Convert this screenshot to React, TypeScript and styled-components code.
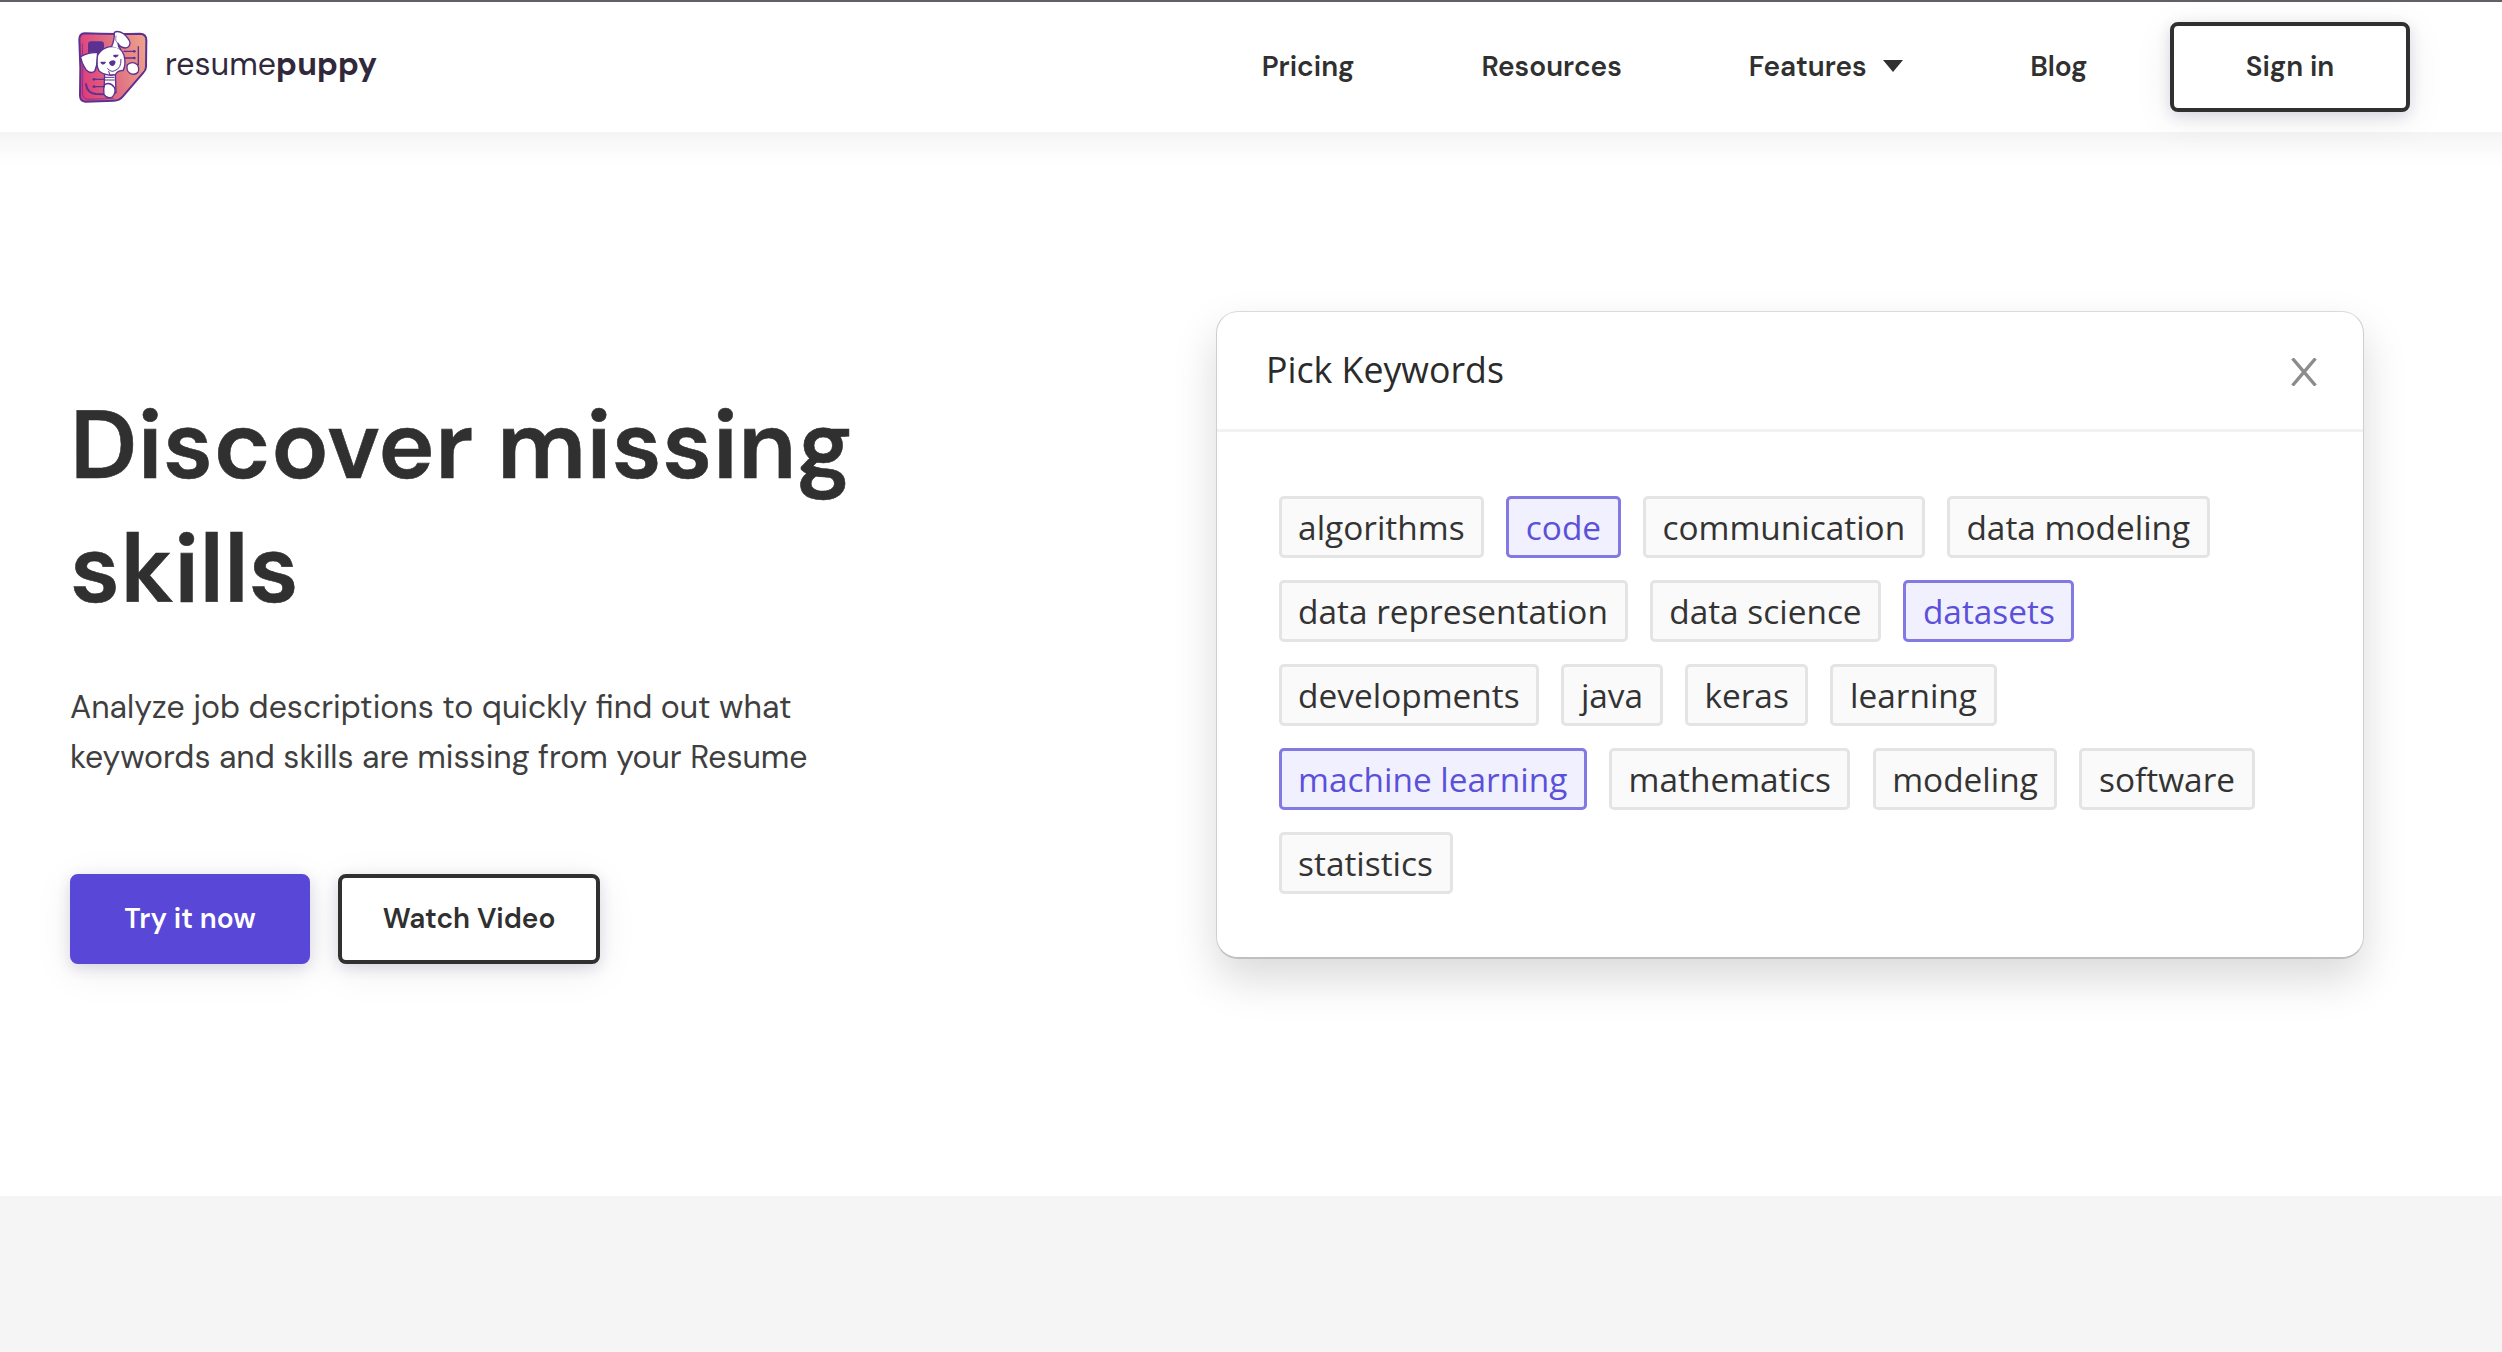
import React from "react";
import styled, { createGlobalStyle, css } from "styled-components";

const ink = "#303030";
const brand = "#5947d8";

const GlobalStyle = createGlobalStyle`
  *, *::before, *::after { box-sizing: border-box; }
  body {
    margin: 0;
    background: #fff;
    color: ${ink};
    font-family: "DM Sans", Inter, sans-serif;
    overflow: hidden;
  }
  h1, h2, p { margin: 0; }
`;

const Page = styled.div`
  display: flex;
  flex-direction: column;
  height: 1352px;
`;

const Header = styled.header`
  position: relative;
  z-index: 1;
  flex: none;
  display: flex;
  align-items: center;
  justify-content: space-between;
  height: 132px;
  padding: 0 92px 0 74px;
  background: #fff;
  border-top: 2px solid #625f67;
  box-shadow: 0 -20px 30px 30px rgba(0, 0, 0, 0.06);
`;

const Brand = styled.a`
  display: flex;
  align-items: center;
  gap: 11px;
  margin-top: -2px;
`;

const Mark = styled.svg`
  display: block;
  width: 80px;
  height: 84px;
`;

const Wordmark = styled.span`
  margin-top: -4px;
  font-size: 32px;
  line-height: 40px;
  font-weight: 400;
  letter-spacing: 0.1px;
  color: #32283c;

  b {
    font-weight: 700;
  }
`;

const Nav = styled.nav`
  display: flex;
  align-items: center;
  gap: 127px;
`;

const NavLink = styled.a<{ $last?: boolean }>`
  display: flex;
  align-items: center;
  gap: 16.5px;
  font-size: 28px;
  line-height: 40px;
  font-weight: 600;
  margin-right: ${(p) => (p.$last ? "-44.4px" : "0")};
`;

const Caret = styled.svg`
  display: block;
  width: 20px;
  height: 12px;
  margin-top: -3px;
`;

const Button = styled.button<{ $solid?: boolean; $width: number }>`
  width: ${(p) => p.$width}px;
  height: 90px;
  padding: 0;
  border: 4px solid ${ink};
  border-radius: 8px;
  background: #fff;
  color: ${ink};
  font: 600 28px/40px "DM Sans", Inter, sans-serif;
  box-shadow: 0 8px 40px rgba(0, 0, 0, 0.07), 0 4px 14px rgba(50, 50, 130, 0.16);
  ${(p) =>
    p.$solid &&
    css`
      border-color: ${brand};
      background: ${brand};
      color: #fff;
    `}
`;

const Hero = styled.main`
  flex: none;
  display: flex;
  align-items: flex-start;
  justify-content: space-between;
  height: 1064px;
  padding: 179px 138px 0 70px;
`;

const Copy = styled.section`
  width: 830px;
  padding-top: 73px;
`;

const Title = styled.h1`
  font-size: 96px;
  line-height: 124px;
  font-weight: 600;
  letter-spacing: 0.22px;
  -webkit-text-stroke: 0.6px ${ink};
`;

const Lead = styled.p`
  margin-top: 50px;
  font-size: 32px;
  line-height: 50px;
  color: #3f3f3f;
`;

const Actions = styled.div`
  display: flex;
  gap: 28px;
  margin-top: 92px;
`;

const Card = styled.section`
  width: 1148px;
  height: 648px;
  border: 1px solid #cfcfcf;
  border-top-color: #dadada;
  border-bottom: 2px solid #bfbfbf;
  border-radius: 22px;
  background: #fff;
  box-shadow: 0 20px 44px rgba(0, 0, 0, 0.15);
  font-family: "Open Sans", sans-serif;
`;

const CardHead = styled.header`
  display: flex;
  align-items: center;
  justify-content: space-between;
  height: 120px;
  padding: 0 46px 4px 49px;
  border-bottom: 3px solid #f2f2f2;
`;

const CardTitle = styled.h2`
  font-size: 35.7px;
  line-height: 48px;
  font-weight: 400;
  color: #2b2b2b;
`;

const Close = styled.svg`
  display: block;
  width: 26px;
  height: 28px;
  margin-top: 7px;
`;

const Chips = styled.div`
  display: flex;
  flex-wrap: wrap;
  gap: 22px 22.1px;
  padding: 63.5px 60px 0 61.5px;
`;

const Chip = styled.span<{ $picked: boolean }>`
  height: 62px;
  padding: 0 16.6px;
  border: 3px solid ${(p) => (p.$picked ? "#8279e3" : "#e4e4e4")};
  border-radius: 5px;
  background: ${(p) => (p.$picked ? "#f1f0fe" : "#fafafa")};
  color: ${(p) => (p.$picked ? "#5b50da" : "#333")};
  font-size: 33.4px;
  line-height: 56px;
  white-space: nowrap;
`;

const Below = styled.section`
  flex: 1;
  background: #f5f5f5;
`;

const keywords: { label: string; picked?: boolean }[] = [
  { label: "algorithms" },
  { label: "code", picked: true },
  { label: "communication" },
  { label: "data modeling" },
  { label: "data representation" },
  { label: "data science" },
  { label: "datasets", picked: true },
  { label: "developments" },
  { label: "java" },
  { label: "keras" },
  { label: "learning" },
  { label: "machine learning", picked: true },
  { label: "mathematics" },
  { label: "modeling" },
  { label: "software" },
  { label: "statistics" },
];

function PuppyMark() {
  return (
    <Mark viewBox="0 0 240 252" fill="none" stroke="#5c3191" strokeLinecap="round" strokeLinejoin="round">
      <defs>
        <linearGradient id="sheet" x1="16" y1="140" x2="218" y2="100" gradientUnits="userSpaceOnUse">
          <stop offset="0" stopColor="#de3d7c" />
          <stop offset="0.5" stopColor="#e06f82" />
          <stop offset="1" stopColor="#eda08b" />
        </linearGradient>
      </defs>
      {/* folded resume sheet */}
      <path
        d="M32 28 Q110 31 198 29 Q217 30 217 48 L216 128 Q216 138 208 146 L146 218 Q136 230 120 230 L34 233 Q19 232 18 216 Q21 130 16 46 Q16 29 32 28Z"
        fill="url(#sheet)"
        strokeWidth="6"
      />
      <path d="M25 60 Q28 130 25 205 Q26 224 42 226 L118 223" strokeWidth="2" />
      <rect x="42" y="52" width="48" height="40" rx="10" fill="#5c3191" stroke="none" />
      <path d="M150 82H181M153 102H181M193 68V122" strokeWidth="4" />
      <path d="M58 166H90M58 188H90" strokeWidth="4" />
      <path d="M36 181 Q40 208 66 210 L90 211" strokeWidth="6" />
      <g fill="#5c3191" stroke="none">
        <circle cx="181" cy="82" r="4" />
        <circle cx="181" cy="102" r="4" />
        <circle cx="60" cy="166" r="4" />
        <circle cx="60" cy="188" r="4" />
      </g>
      {/* puppy */}
      <g fill="#fff" strokeWidth="4">
        <path d="M92 150 L124 148 L126 206 L90 200Z" />
        <path d="M92 182 Q108 172 121 190 Q128 208 114 219 Q98 225 90 211 Q87 194 92 182Z" />
        <path d="M160 122 Q176 110 190 122 Q197 133 192 145 Q182 155 168 148 Q156 142 160 122Z" />
        <path d="M80 82 Q96 66 118 68 Q142 70 150 94 Q157 122 147 140 Q132 138 124 152 Q98 158 76 142 Q66 126 69 104 Q70 90 80 82Z" />
        <path d="M71 86 Q44 84 20 98 Q22 116 36 137 Q50 151 62 142 Q70 126 69 106Z" />
        <path d="M113 67 Q122 48 121 25 Q132 19 147 28 Q164 42 168 56 Q168 70 154 72 Q138 70 132 58 Q132 68 140 76" />
      </g>
      <path d="M126 36 Q122 54 132 58" strokeWidth="2" />
      <path
        d="M80 116 Q86 124 94 116M118 96 Q125 103 133 94M101 134 Q112 146 122 140 Q142 134 141 106M93 160H120M94 168H121M104 142 L108 154 L120 152"
        strokeWidth="3"
      />
      <g fill="#5c3191" stroke="none">
        <path d="M81 113 H94 V117 Q87 126 81 117Z" />
        <path d="M119 92 H132 V96 Q126 104 119 97Z" />
        <path d="M105 115 Q114 105 124 111 Q126 121 117 126 Q107 127 105 115Z" />
      </g>
    </Mark>
  );
}

export default function App() {
  return (
    <Page>
      <GlobalStyle />
      <Header>
        <Brand>
          <PuppyMark />
          <Wordmark>
            resume<b>puppy</b>
          </Wordmark>
        </Brand>
        <Nav>
          <NavLink>Pricing</NavLink>
          <NavLink>Resources</NavLink>
          <NavLink>
            Features
            <Caret viewBox="0 0 20 12">
              <path d="M0 0H20L10 12Z" fill={ink} />
            </Caret>
          </NavLink>
          <NavLink $last>Blog</NavLink>
          <Button $width={240}>Sign in</Button>
        </Nav>
      </Header>
      <Hero>
        <Copy>
          <Title>Discover missing skills</Title>
          <Lead>Analyze job descriptions to quickly find out what keywords and skills are missing from your Resume</Lead>
          <Actions>
            <Button $solid $width={240}>
              Try it now
            </Button>
            <Button $width={262}>Watch Video</Button>
          </Actions>
        </Copy>
        <Card>
          <CardHead>
            <CardTitle>Pick Keywords</CardTitle>
            <Close viewBox="0 0 26 28" fill="none" stroke="#8c8c8c" strokeWidth="3.4">
              <path d="M1.5 0.5L24.5 27.5M24.5 0.5L1.5 27.5" />
            </Close>
          </CardHead>
          <Chips>
            {keywords.map((k) => (
              <Chip key={k.label} $picked={!!k.picked}>
                {k.label}
              </Chip>
            ))}
          </Chips>
        </Card>
      </Hero>
      <Below />
    </Page>
  );
}
